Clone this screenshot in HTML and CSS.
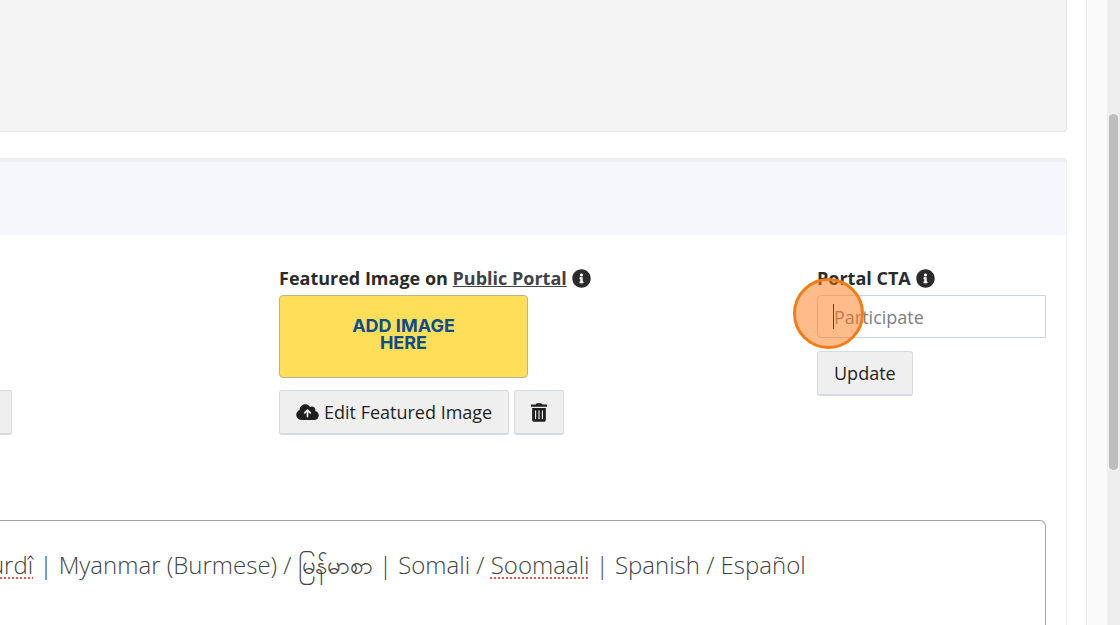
FILE: index.html
```html
<!DOCTYPE html>
<html lang="en">
<head>
    <meta charset="UTF-8">
    <meta name="viewport" content="width=device-width, initial-scale=1.0">
    <title>Portal Settings</title>
    <link rel="stylesheet" href="styles.css">
</head>
<body>
    <main class="content">
        <section class="preview"></section>
        <section class="panel">
            <header class="panel-header"></header>
            <div class="settings">
                <div class="setting setting-first">
                    <button type="button" class="btn btn-clipped" aria-label="Edit"></button>
                </div>
                <div class="setting">
                    <div class="setting-label">
                        <span>Featured Image on <a href="#">Public Portal</a></span>
                        <svg class="icon-info" viewBox="0 0 512 512"><path d="M256 8C119.043 8 8 119.083 8 256c0 136.997 111.043 248 248 248s248-111.003 248-248C504 119.083 392.957 8 256 8zm0 110c23.196 0 42 18.804 42 42s-18.804 42-42 42-42-18.804-42-42 18.804-42 42-42zm56 254c0 6.627-5.373 12-12 12h-88c-6.627 0-12-5.373-12-12v-24c0-6.627 5.373-12 12-12h12v-64h-12c-6.627 0-12-5.373-12-12v-24c0-6.627 5.373-12 12-12h64c6.627 0 12 5.373 12 12v100h12c6.627 0 12 5.373 12 12v24z"/></svg>
                    </div>
                    <div class="featured-image">ADD IMAGE<br>HERE</div>
                    <div class="actions">
                        <button type="button" class="btn">
                            <svg class="icon-cloud" viewBox="0 0 640 512"><path d="M144 480C64.5 480 0 415.5 0 336c0-62.8 40.2-116.2 96.2-135.9c-.1-2.7-.2-5.4-.2-8.1c0-88.4 71.6-160 160-160c59.3 0 111 32.2 138.7 80.2C409.9 102 428.3 96 448 96c53 0 96 43 96 96c0 12.2-2.3 23.8-6.4 34.6C596 238.4 640 290.1 640 352c0 70.7-57.3 128-128 128H144zm79-217c-9.4 9.4-9.4 24.6 0 33.9s24.6 9.4 33.9 0l39-39V392c0 13.3 10.7 24 24 24s24-10.7 24-24V257.9l39 39c9.4 9.4 24.6 9.4 33.9 0s9.4-24.6 0-33.9l-80-80c-9.4-9.4-24.6-9.4-33.9 0l-80 80z"/></svg>
                            Edit Featured Image
                        </button>
                        <button type="button" class="btn" aria-label="Delete">
                            <svg class="icon-trash" viewBox="0 0 448 512"><path d="M32 464a48 48 0 0 0 48 48h288a48 48 0 0 0 48-48V128H32zm272-256a16 16 0 0 1 32 0v224a16 16 0 0 1-32 0zm-96 0a16 16 0 0 1 32 0v224a16 16 0 0 1-32 0zm-96 0a16 16 0 0 1 32 0v224a16 16 0 0 1-32 0zM432 32H312l-9.4-18.7A24 24 0 0 0 281.1 0H166.8a23.7 23.7 0 0 0-21.4 13.3L136 32H16A16 16 0 0 0 0 48v32a16 16 0 0 0 16 16h416a16 16 0 0 0 16-16V48a16 16 0 0 0-16-16z"/></svg>
                        </button>
                    </div>
                </div>
                <div class="setting">
                    <label class="setting-label" for="cta">
                        <span>Portal CTA</span>
                        <svg class="icon-info" viewBox="0 0 512 512"><path d="M256 8C119.043 8 8 119.083 8 256c0 136.997 111.043 248 248 248s248-111.003 248-248C504 119.083 392.957 8 256 8zm0 110c23.196 0 42 18.804 42 42s-18.804 42-42 42-42-18.804-42-42 18.804-42 42-42zm56 254c0 6.627-5.373 12-12 12h-88c-6.627 0-12-5.373-12-12v-24c0-6.627 5.373-12 12-12h12v-64h-12c-6.627 0-12-5.373-12-12v-24c0-6.627 5.373-12 12-12h64c6.627 0 12 5.373 12 12v100h12c6.627 0 12 5.373 12 12v24z"/></svg>
                    </label>
                    <div class="cta-field">
                        <input type="text" id="cta" placeholder="Participate">
                        <span class="caret"></span>
                        <span class="click-marker"></span>
                    </div>
                    <button type="button" class="btn">Update</button>
                </div>
            </div>
            <div class="editor">
                <p><span class="misspelled">Kurdî</span> | Myanmar (Burmese) / မြန်မာစာ | Somali / <span class="misspelled">Soomaali</span> | Spanish / Español</p>
            </div>
        </section>
    </main>
    <div class="gutter"></div>
    <div class="scrollbar"><div class="scrollbar-thumb"></div></div>
</body>
</html>
```
FILE: styles.css
```css
* {
    box-sizing: border-box;
}

body {
    margin: 0;
    height: 100vh;
    display: flex;
    overflow: hidden;
    background-color: #fff;
    color: #2b2b2b;
    font-family: "Open Sans", "Noto Sans", sans-serif;
    font-size: 18px;
    line-height: 24px;
}

.content {
    flex: 1;
    min-width: 0;
    padding-right: 19px;
    display: flex;
    flex-direction: column;
}

.preview {
    height: 132px;
    flex-shrink: 0;
    background-color: #f4f4f4;
    border: solid #e2e3e4;
    border-width: 0 1px 1px 0;
    border-bottom-right-radius: 4px;
}

.panel {
    flex: 1;
    display: flex;
    flex-direction: column;
    margin-top: 26px;
    border: solid #eceef1;
    border-width: 4px 1px 0 0;
    border-top-right-radius: 4px;
}

.panel-header {
    height: 73px;
    background-color: #f6f7fc;
}

.settings {
    display: grid;
    grid-template-columns: 279fr 538fr 229fr;
    align-items: start;
    padding: 31px 20px 0 0;
}

.setting {
    min-width: 0;
}

.setting-first {
    align-self: end;
}

.setting-label {
    display: flex;
    align-items: center;
    gap: 5px;
    height: 24px;
    margin-bottom: 5px;
    font-weight: 700;
    white-space: nowrap;
}

.setting-label a {
    color: #414349;
    text-decoration: underline;
}

.featured-image {
    width: 249px;
    height: 83px;
    padding-top: 21px;
    border: 1px solid #bdb48a;
    border-radius: 4px;
    background-color: #ffde59;
    color: #0f4c8a;
    font-family: Inter, sans-serif;
    font-size: 18px;
    font-weight: 700;
    line-height: 17px;
    text-align: center;
}

.actions {
    display: flex;
    gap: 5px;
    margin-top: 12px;
}

.btn {
    display: flex;
    align-items: center;
    gap: 5px;
    height: 45px;
    padding: 0 16px;
    border: 1px solid #d6dae2;
    border-bottom-width: 2px;
    border-radius: 3px;
    background-color: #efefef;
    color: #1f1f1f;
    font: inherit;
    white-space: nowrap;
}

.btn-clipped {
    width: 48px;
    margin-left: -36px;
}

svg {
    flex-shrink: 0;
    fill: currentColor;
}

.icon-info {
    width: 19px;
    height: 19px;
}

.icon-cloud {
    width: 23px;
    height: 18px;
}

.icon-trash {
    width: 16px;
    height: 19px;
}

.cta-field {
    position: relative;
    margin-bottom: 13px;
}

.cta-field input {
    display: block;
    width: 100%;
    height: 43px;
    padding: 0 16px;
    border: 1px solid #cdd3d8;
    border-radius: 4px 0 0 4px;
    background-color: #fff;
    font: inherit;
    outline: none;
}

.cta-field input::placeholder {
    color: #808080;
    opacity: 1;
}

.caret {
    position: absolute;
    left: 16px;
    top: 9px;
    width: 1px;
    height: 25px;
    background-color: #000;
}

.click-marker {
    position: absolute;
    left: -24px;
    top: -17px;
    width: 71px;
    height: 71px;
    border: 3px solid #f27d16;
    border-radius: 50%;
    background-color: rgba(255, 122, 24, 0.5);
    pointer-events: none;
}

.editor {
    flex: 1;
    margin: 85px 20px 0 0;
    padding-top: 28px;
    border: solid #a3a3a3;
    border-width: 1px 1px 0 0;
    border-top-right-radius: 6px;
    overflow: hidden;
}

.editor p {
    margin: 0 0 0 -24px;
    color: #444;
    font-size: 24px;
    font-weight: 300;
    line-height: 32px;
    white-space: nowrap;
}

.misspelled {
    text-decoration: underline dotted #e8554d 2px;
    text-underline-offset: 3px;
    text-decoration-skip-ink: none;
}

.gutter {
    width: 21px;
    border-left: 1px solid #ededed;
    background-color: #fafafa;
}

.scrollbar {
    width: 13px;
    padding: 114px 2px 0;
    background-color: #eee;
}

.scrollbar-thumb {
    height: 356px;
    border-radius: 5px;
    background-color: #bdbdbd;
}
```
